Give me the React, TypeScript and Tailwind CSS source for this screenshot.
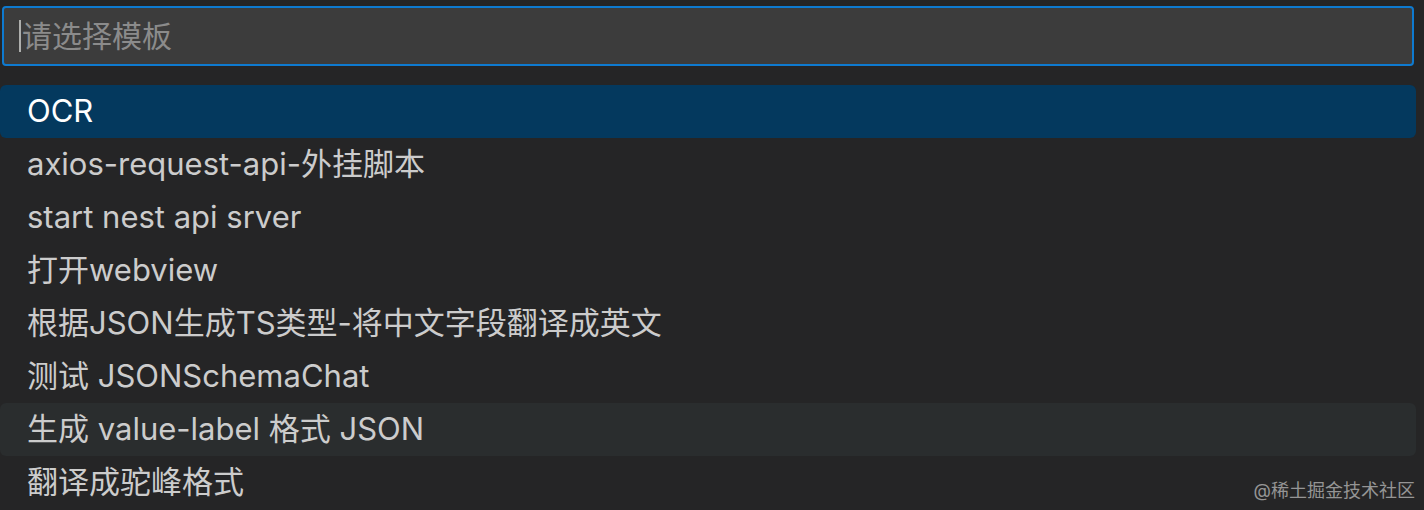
const items = [
  "OCR",
  "axios-request-api-外挂脚本",
  "start nest api srver",
  "打开webview",
  "根据JSON生成TS类型-将中文字段翻译成英文",
  "测试 JSONSchemaChat",
  "生成 value-label 格式 JSON",
  "翻译成驼峰格式",
];

export default function App() {
  return (
    <div
      className="relative w-[1424px] h-[510px] overflow-hidden bg-[#252526]"
      style={{ fontFamily: 'Inter, "Noto Sans CJK SC", sans-serif' }}
    >
      {/* Search box */}
      <div className="pt-[6px] pl-[2px] pr-[10px]">
        <div className="h-[60px] flex items-center rounded-[4px] border-2 border-[#0e7ad0] bg-[#3c3c3c] pl-[15px]">
          <span className="w-[2px] h-[32px] bg-[#aeafad]" />
          <span className="ml-[1px] text-[30px] text-[#8b8b8b]">请选择模板</span>
        </div>
      </div>

      {/* Quick pick list */}
      <div className="mt-[19px] pr-[8px]">
        {items.map((label, i) => (
          <div
            key={label}
            className={
              "h-[53px] flex items-center pl-[27px] rounded-[6px] text-[31px] " +
              (i === 0
                ? "bg-[#04395e] text-white"
                : i === 6
                ? "bg-[#2a2d2e] text-[#cccccc]"
                : "text-[#cccccc]")
            }
          >
            {label}
          </div>
        ))}
      </div>

      {/* Watermark */}
      <div className="absolute right-[9px] bottom-[6px] text-[18px] text-[#959595]">
        @稀土掘金技术社区
      </div>
    </div>
  );
}
